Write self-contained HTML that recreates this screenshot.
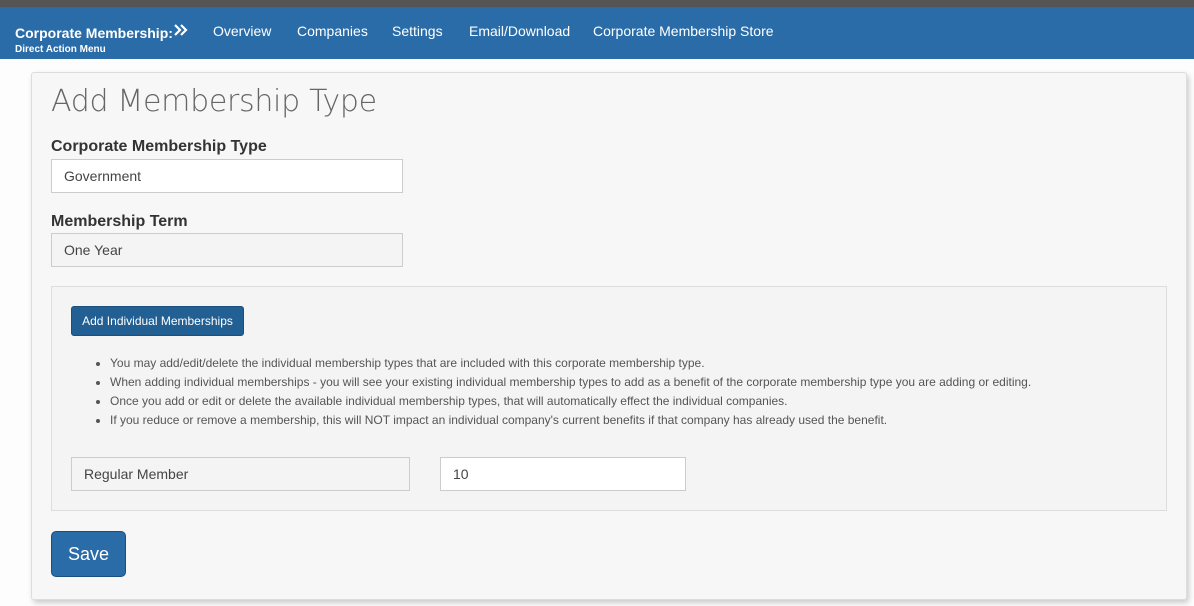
<!DOCTYPE html>
<html><head><style>
*{box-sizing:border-box;margin:0;padding:0}
body{width:1194px;height:606px;overflow:hidden;background:#fdfdfd;font-family:"Liberation Sans",Arial,sans-serif;position:relative;color:#333}
.a{position:absolute}
.top{left:0;top:0;width:1194px;height:7px;background:#555}
.nav{left:0;top:7px;width:1194px;height:52px;background:#2a6ca8;color:#fff}
.nav .t{position:absolute;font-weight:bold;font-size:14px;left:15px;top:18px}
.nav .s{position:absolute;font-weight:bold;font-size:10px;left:15px;top:37px}
.nav .l{position:absolute;font-size:14px;top:16px}
.card{left:31px;top:72px;width:1156px;height:528px;background:#f7f7f7;border:1px solid #ddd;border-radius:3px;box-shadow:2px 3px 6px rgba(0,0,0,.2)}
h1{position:absolute;left:51px;top:84px;font-weight:300;font-size:30px;color:#666;font-family:"DejaVu Sans","Liberation Sans",sans-serif;font-weight:200;letter-spacing:-0.3px}
.lbl{position:absolute;left:51px;font-weight:bold;font-size:16px;color:#333}
.in{position:absolute;border:1px solid #ccc;background:#fff;font-size:14px;color:#444;padding-left:12px;display:flex;align-items:center}
.panel{left:51px;top:286px;width:1116px;height:225px;background:#f4f4f4;border:1px solid #ddd}
.btn{position:absolute;background:#225f93;color:#fff;font-size:12px;border:1px solid #1b4f7d;border-radius:3px;display:flex;align-items:center;justify-content:center}
ul{position:absolute;left:110px;top:354px;font-size:12px;color:#555;line-height:19px;list-style:disc}
</style></head><body>
<div class="a top"></div>
<div class="a nav">
<div class="t">Corporate Membership:</div>
<svg class="a" style="left:173px;top:16px" width="16" height="14" viewBox="0 0 16 14"><path d="M2 2l5 5-5 5M8 2l5 5-5 5" stroke="#fff" stroke-width="2.2" fill="none"/></svg>
<div class="s">Direct Action Menu</div>
<div class="l" style="left:213px">Overview</div>
<div class="l" style="left:297px">Companies</div>
<div class="l" style="left:392px">Settings</div>
<div class="l" style="left:469px">Email/Download</div>
<div class="l" style="left:593px">Corporate Membership Store</div>
</div>
<div class="a card"></div>
<h1>Add Membership Type</h1>
<div class="lbl" style="top:138px">Corporate Membership Type</div>
<div class="in" style="left:51px;top:159px;width:352px;height:34px">Government</div>
<div class="lbl" style="top:213px">Membership Term</div>
<div class="in" style="left:51px;top:233px;width:352px;height:34px;background:#f4f4f4">One Year</div>
<div class="a panel"></div>
<div class="btn" style="left:71px;top:306px;width:173px;height:30px">Add Individual Memberships</div>
<ul>
<li>You may add/edit/delete the individual membership types that are included with this corporate membership type.</li>
<li>When adding individual memberships - you will see your existing individual membership types to add as a benefit of the corporate membership type you are adding or editing.</li>
<li>Once you add or edit or delete the available individual membership types, that will automatically effect the individual companies.</li>
<li>If you reduce or remove a membership, this will NOT impact an individual company's current benefits if that company has already used the benefit.</li>
</ul>
<div class="in" style="left:71px;top:457px;width:339px;height:34px;background:#f4f4f4">Regular Member</div>
<div class="in" style="left:440px;top:457px;width:246px;height:34px">10</div>
<div class="btn" style="left:51px;top:531px;width:75px;height:46px;font-size:18px;background:#2a6ca8;border-radius:5px">Save</div>
</body></html>
